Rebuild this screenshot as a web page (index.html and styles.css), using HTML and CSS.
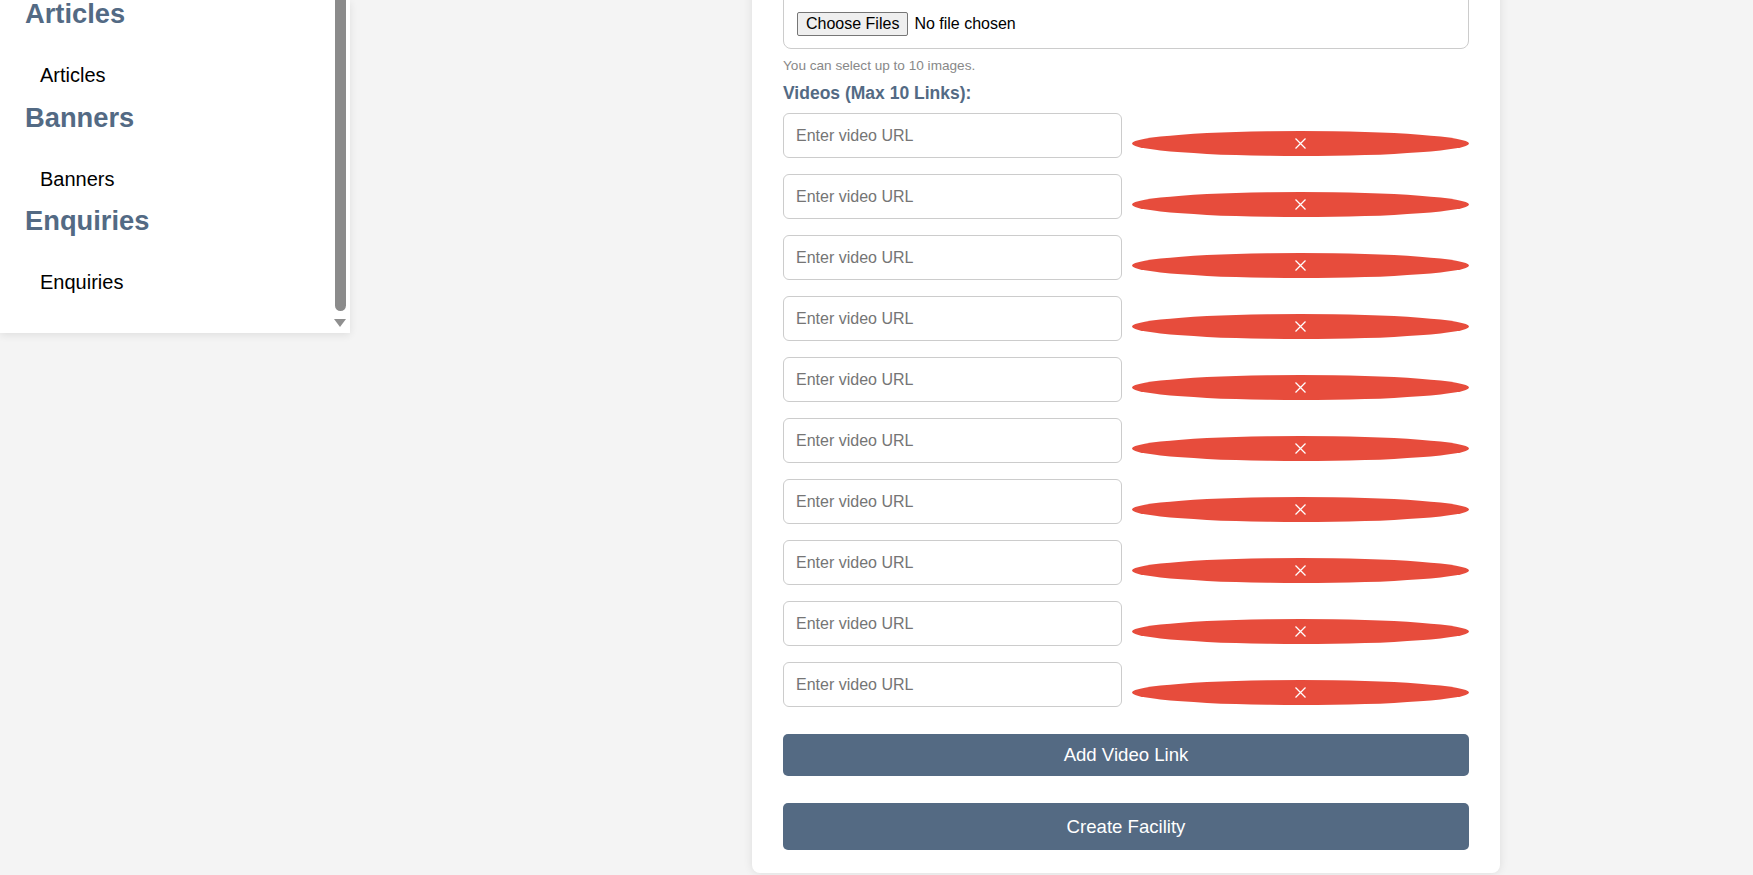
FILE: index.html
```html
<!DOCTYPE html>
<html lang="en">
<head>
<meta charset="utf-8">
<title>Create Facility</title>
<link rel="stylesheet" href="styles.css">
</head>
<body>
<div class="layout">
  <aside class="sidebar">
    <nav class="nav">
      <section class="nav-section">
        <h2 class="nav-heading">Articles</h2>
        <a class="nav-link" href="#">Articles</a>
      </section>
      <section class="nav-section">
        <h2 class="nav-heading">Banners</h2>
        <a class="nav-link" href="#">Banners</a>
      </section>
      <section class="nav-section">
        <h2 class="nav-heading">Enquiries</h2>
        <a class="nav-link" href="#">Enquiries</a>
      </section>
    </nav>
    <div class="scrollbar">
      <div class="scroll-thumb"></div>
      <div class="scroll-arrow"></div>
    </div>
  </aside>

  <main class="main">
    <form class="card">
      <input class="file-input" type="file" multiple accept="image/*">
      <p class="hint">You can select up to 10 images.</p>
      <label class="field-label">Videos (Max 10 Links):</label>
      <div class="video-list">
        <div class="video-row"><input class="video-input" type="text" placeholder="Enter video URL"><button type="button" class="remove-btn"><svg width="11" height="11" viewBox="0 0 11 11"><path d="M0.5 0.5L10.5 10.5M10.5 0.5L0.5 10.5" stroke="#fff" stroke-width="1.3"/></svg></button></div>
        <div class="video-row"><input class="video-input" type="text" placeholder="Enter video URL"><button type="button" class="remove-btn"><svg width="11" height="11" viewBox="0 0 11 11"><path d="M0.5 0.5L10.5 10.5M10.5 0.5L0.5 10.5" stroke="#fff" stroke-width="1.3"/></svg></button></div>
        <div class="video-row"><input class="video-input" type="text" placeholder="Enter video URL"><button type="button" class="remove-btn"><svg width="11" height="11" viewBox="0 0 11 11"><path d="M0.5 0.5L10.5 10.5M10.5 0.5L0.5 10.5" stroke="#fff" stroke-width="1.3"/></svg></button></div>
        <div class="video-row"><input class="video-input" type="text" placeholder="Enter video URL"><button type="button" class="remove-btn"><svg width="11" height="11" viewBox="0 0 11 11"><path d="M0.5 0.5L10.5 10.5M10.5 0.5L0.5 10.5" stroke="#fff" stroke-width="1.3"/></svg></button></div>
        <div class="video-row"><input class="video-input" type="text" placeholder="Enter video URL"><button type="button" class="remove-btn"><svg width="11" height="11" viewBox="0 0 11 11"><path d="M0.5 0.5L10.5 10.5M10.5 0.5L0.5 10.5" stroke="#fff" stroke-width="1.3"/></svg></button></div>
        <div class="video-row"><input class="video-input" type="text" placeholder="Enter video URL"><button type="button" class="remove-btn"><svg width="11" height="11" viewBox="0 0 11 11"><path d="M0.5 0.5L10.5 10.5M10.5 0.5L0.5 10.5" stroke="#fff" stroke-width="1.3"/></svg></button></div>
        <div class="video-row"><input class="video-input" type="text" placeholder="Enter video URL"><button type="button" class="remove-btn"><svg width="11" height="11" viewBox="0 0 11 11"><path d="M0.5 0.5L10.5 10.5M10.5 0.5L0.5 10.5" stroke="#fff" stroke-width="1.3"/></svg></button></div>
        <div class="video-row"><input class="video-input" type="text" placeholder="Enter video URL"><button type="button" class="remove-btn"><svg width="11" height="11" viewBox="0 0 11 11"><path d="M0.5 0.5L10.5 10.5M10.5 0.5L0.5 10.5" stroke="#fff" stroke-width="1.3"/></svg></button></div>
        <div class="video-row"><input class="video-input" type="text" placeholder="Enter video URL"><button type="button" class="remove-btn"><svg width="11" height="11" viewBox="0 0 11 11"><path d="M0.5 0.5L10.5 10.5M10.5 0.5L0.5 10.5" stroke="#fff" stroke-width="1.3"/></svg></button></div>
        <div class="video-row"><input class="video-input" type="text" placeholder="Enter video URL"><button type="button" class="remove-btn"><svg width="11" height="11" viewBox="0 0 11 11"><path d="M0.5 0.5L10.5 10.5M10.5 0.5L0.5 10.5" stroke="#fff" stroke-width="1.3"/></svg></button></div>
      </div>
      <button type="button" class="primary-btn add-btn">Add Video Link</button>
      <button type="submit" class="primary-btn submit-btn">Create Facility</button>
    </form>
  </main>
</div>
</body>
</html>
```

FILE: styles.css
```css
* {
  box-sizing: border-box;
}

html, body {
  margin: 0;
  height: 100%;
  overflow: hidden;
}

body {
  background: #f4f4f4;
  font-family: "Liberation Sans", Arial, sans-serif;
  color: #000;
}

.layout {
  display: flex;
  align-items: flex-start;
}

/* Sidebar */
.sidebar {
  flex: 0 0 350px;
  height: 333px;
  background: #fff;
  display: flex;
  box-shadow: 0 2px 8px rgba(0, 0, 0, 0.09);
}

.nav {
  flex: 1;
  padding-left: 25px;
}

.nav-section {
  margin-bottom: 16.6px;
}

.nav-heading {
  margin: 0 0 35px;
  font-size: 27.3px;
  line-height: 28px;
  font-weight: bold;
  color: #536a84;
}

.nav-link {
  display: block;
  padding-left: 15px;
  font-size: 20px;
  line-height: 24px;
  color: #000;
  text-decoration: none;
}

.scrollbar {
  flex: 0 0 15px;
  display: flex;
  flex-direction: column;
  align-items: flex-start;
}

.scroll-thumb {
  width: 11px;
  flex: 1;
  margin-bottom: 8px;
  background: #8b8b8b;
  border-radius: 0 0 6px 6px;
}

.scroll-arrow {
  width: 0;
  height: 0;
  margin: 0 0 6px -1px;
  border-left: 6.5px solid transparent;
  border-right: 6.5px solid transparent;
  border-top: 8px solid #8f8f8f;
}

/* Main */
.main {
  flex: 1;
  padding-left: 402px;
}

.card {
  width: 748px;
  margin-top: -40px;
  padding: 20px 31px 23px;
  background: #fff;
  border-radius: 8px;
  box-shadow: 0 0 10px rgba(0, 0, 0, 0.1);
  display: flex;
  flex-direction: column;
}

.file-input {
  display: block;
  width: 100%;
  height: 69px;
  padding: 31px 13px 12px;
  border: 1px solid #ccc;
  border-radius: 8px;
  font-family: "Liberation Sans", Arial, sans-serif;
  font-size: 16px;
  color: #000;
  background: #fff;
}

.file-input::file-selector-button {
  height: 24px;
  padding: 0 8px;
  margin-right: 6px;
  font-family: "Liberation Sans", Arial, sans-serif;
  font-size: 16px;
  color: #000;
  background: #efefef;
  border: 1px solid #767676;
  border-radius: 2px;
}

.hint {
  margin: 8.5px 0 0;
  font-size: 13.6px;
  color: #888;
}

.field-label {
  display: block;
  margin: 10.5px 0 9px;
  font-size: 17.5px;
  font-weight: bold;
  color: #536a84;
}

.video-list {
  display: flex;
  flex-direction: column;
}

.video-row {
  display: flex;
  align-items: center;
  gap: 10px;
}

.video-input {
  flex: 0 0 339px;
  height: 45px;
  margin: 0 0 16px;
  padding: 0 12px;
  border: 1px solid #ccc;
  border-radius: 6px;
  font-family: "Liberation Sans", Arial, sans-serif;
  font-size: 16px;
  color: #333;
  background: #fff;
}

.video-input::placeholder {
  color: #757575;
}

.remove-btn {
  flex: 1;
  height: 25px;
  margin-bottom: 1px;
  padding: 0;
  border: none;
  border-radius: 50%;
  background: #e74c3c;
  display: flex;
  align-items: center;
  justify-content: center;
}

.remove-btn svg {
  display: block;
}

.primary-btn {
  width: 100%;
  border: none;
  border-radius: 5px;
  background: #546a83;
  color: #fff;
  font-family: "Liberation Sans", Arial, sans-serif;
  font-size: 18.6px;
  padding: 0;
}

.add-btn {
  height: 42px;
  margin-top: 11.3px;
}

.submit-btn {
  height: 47px;
  margin-top: 27px;
}
```
